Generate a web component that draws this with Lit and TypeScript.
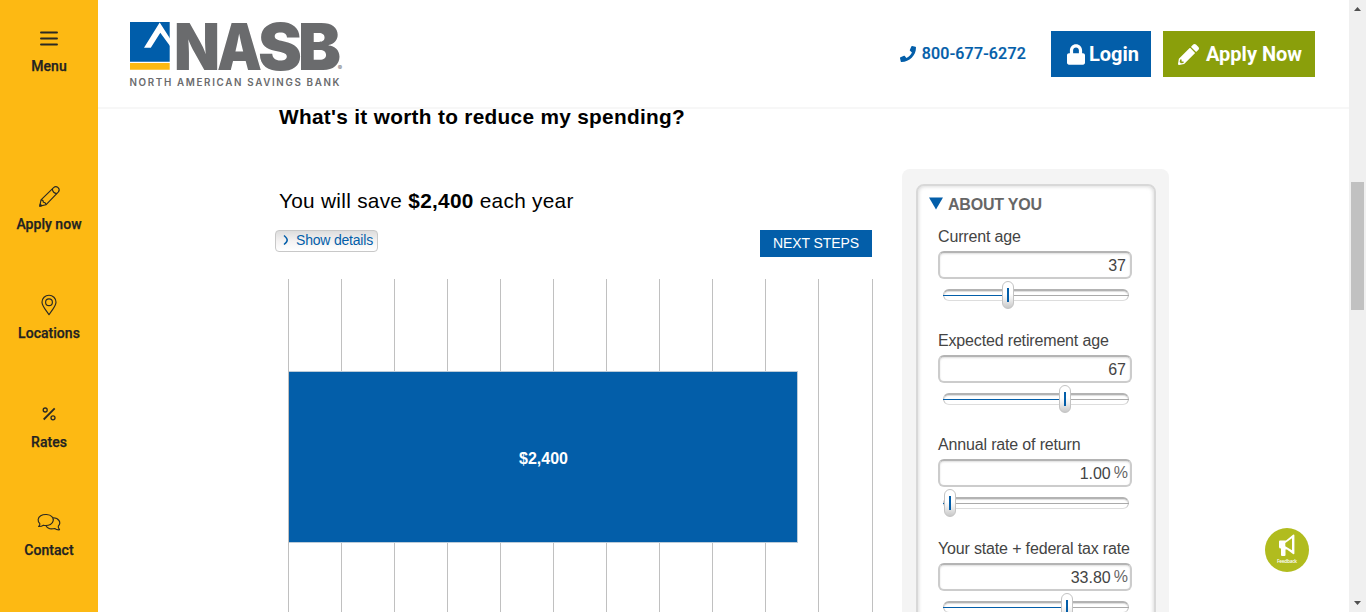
import { LitElement, html, svg, css } from "lit";
import { customElement, property } from "lit/decorators.js";

const navIcons: Record<string, unknown> = {
  menu: svg`<path d="M4 6.500h16M4 12.500h16M4 18.500h16" stroke-width="1.900" stroke-linecap="round"/>`,
  pencil: svg`<path d="M2.800 22.100l1.200-6.300L16.600 3.600c1.500-1.400 3.100-1.200 4.500.1 1.400 1.400 1.500 3 .1 4.500L8.900 20.800z"/><path d="M4 15.800c1.700 0 2.400.7 2.400 2.400 1.700 0 2.400.9 2.500 2.600M15.300 4.900c.3 2.700 2 4.400 4.600 4.700M2.800 22.100l2-.5-1.600-1.500z"/>`,
  pin: svg`<path d="M12 21.700c-2.100-3.500-7-8.500-7-12.500a7 7 0 0 1 14 0c0 4-4.900 9-7 12.500z"/><circle cx="12" cy="9.200" r="3.400"/>`,
  percent: svg`<path d="M6.700 17.500L17.700 6.300" stroke-width="1.800"/><circle cx="8.200" cy="8" r="2" stroke-width="1.300"/><circle cx="16" cy="15.800" r="2" stroke-width="1.300"/>`,
  chat: svg`<path d="M1.600 16.500c1-.8 1.500-1.700 1.200-2.900C.3 11.200.6 7.700 3.700 5.800c3.300-2 8.700-1.700 11.200.9 2.400 2.600 1.500 6.100-1.500 7.700-2.300 1.200-4.500 1.300-7 .8-1.400 1-2.900 1.400-4.800 1.300z"/><path d="M16 7.800c5.800-.1 8.600 4.900 5.300 8.300-.2 1.500.3 2.500 1.200 3.300v.4c-1.800.2-3.400-.2-4.800-1.300-3.700.9-7.300-.1-8.700-2.700"/>`,
};

interface Field { label: string; value: string; unit: string; handle: number; }

@customElement("side-item")
class SideItem extends LitElement {
  @property() icon = "";
  @property() label = "";
  static styles = css`
    :host { display: flex; flex-direction: column; align-items: center; height: 50px; }
    svg { width: 25px; height: 25px; fill: none; stroke: #2b2a24; stroke-width: 1.15; stroke-linejoin: round; overflow: visible; }
    .label { margin-top: 7px; font: 500 14px/16px Roboto, sans-serif; letter-spacing: .03px; color: #222; -webkit-text-stroke: .25px #222; white-space: nowrap; }
  `;
  render() {
    return html`<svg viewBox="0 0 25 25">${navIcons[this.icon]}</svg><span class="label">${this.label}</span>`;
  }
}

@customElement("slider-field")
class SliderField extends LitElement {
  @property() label = "";
  @property() value = "";
  @property() unit = "";
  @property({ type: Number }) handle = 0;
  static styles = css`
    :host { display: block; height: 104px; width: 194px; color: #444; font: 16px/18px "Liberation Sans", Arial, sans-serif; }
    .label { height: 23px; white-space: nowrap; letter-spacing: -.16px; }
    .input { box-sizing: border-box; height: 28px; border: 2px solid #ccc; border-top-color: #b4b4b4; border-radius: 6px; box-shadow: inset 0 1px 2px #ddd; padding: 2px 4px 0 0; display: flex; justify-content: flex-end; align-items: center; background: #fff; }
    .input.has-unit { padding-right: 2px; gap: 3px; }
    .unit { color: #666; font-size: 16px; line-height: 18px; margin-top: -2px; }
    .slider { display: grid; width: 186px; height: 28px; margin: 2px 0 0 5px; align-items: center; }
    .slider > * { grid-area: 1 / 1; }
    .track { box-sizing: border-box; height: 12px; border: 1px solid #c4c4c4; border-top: 2px solid #b3b3b3; border-bottom-color: #ddd; border-radius: 6px; box-shadow: inset 0 1px 1px #ddd; }
    .line { height: 1px; background: #aaa; }
    .fill { height: 1px; background: #035ea9; }
    .handle { box-sizing: border-box; width: 12px; height: 28px; border: 1px solid #c3c3c3; border-radius: 6px; background: linear-gradient(#fff 45%, #eee 65%, #c8c8c8); display: flex; justify-content: center; align-items: center; }
    .mark { width: 2px; height: 14px; background: #035ea9; }
  `;
  render() {
    return html`
      <div class="label">${this.label}</div>
      <div class="input ${this.unit ? "has-unit" : ""}"><span>${this.value}</span>${this.unit ? html`<span class="unit">${this.unit}</span>` : ""}</div>
      <div class="slider">
        <div class="track"></div><div class="line"></div>
        <div class="fill" style="width:${this.handle}px"></div>
        <div class="handle" style="margin-left:${this.handle}px"><div class="mark"></div></div>
      </div>`;
  }
}

@customElement("app-root")
class AppRoot extends LitElement {
  fields: Field[] = [
    { label: "Current age", value: "37", unit: "", handle: 59 },
    { label: "Expected retirement age", value: "67", unit: "", handle: 116 },
    { label: "Annual rate of return", value: "1.00", unit: "%", handle: 1 },
    { label: "Your state + federal tax rate", value: "33.80", unit: "%", handle: 118 },
  ];
  static styles = css`
    :host { display: flex; width: 1366px; height: 612px; overflow: hidden; position: relative; background: #fff; font-family: "Liberation Sans", Arial, sans-serif; }
    .sidebar { width: 98px; flex: none; background: #fdb913; box-sizing: border-box; padding-top: 26px; }
    .links { margin-top: 108px; display: flex; flex-direction: column; gap: 58.760px; }
    .page { flex: 1; min-width: 0; display: flex; flex-direction: column; }
    .header { box-sizing: border-box; height: 109px; flex: none; border-bottom: 2px solid #f7f7f7; display: flex; align-items: flex-start; padding: 20px 34px 0 31px; font-family: Roboto, sans-serif; }
    .logo { width: 216px; height: 70px; }
    .phone { margin: 25px 0 0 auto; display: flex; align-items: center; gap: 6px; font-weight: 500; font-size: 16px; line-height: 18px; letter-spacing: .2px; color: #035ea9; -webkit-text-stroke: .2px #035ea9; }
    .phone svg { width: 16px; height: 16px; }
    .btn { box-sizing: border-box; margin-top: 11px; height: 46px; display: flex; align-items: center; color: #fff; font-weight: 700; font-size: 20px; white-space: nowrap; }
    .login { width: 100px; background: #035ea9; margin-left: 25px; gap: 4px; padding-left: 16px; }
    .login svg { width: 18px; height: 21px; }
    .apply { width: 152px; background: #8a9f0b; margin-left: 12px; gap: 7px; padding-left: 15px; }
    .apply svg { width: 21px; height: 21px; }
    .content { flex: 1; min-height: 0; display: flex; gap: 29px; padding-left: 177px; color: #000; }
    .left { width: 598px; flex: none; display: flex; flex-direction: column; }
    h1 { margin: -4px 0 0 4px; font-size: 20.800px; line-height: 24px; letter-spacing: .310px; white-space: nowrap; }
    .result { margin: 60px 0 0 4px; font-size: 20.800px; line-height: 24px; letter-spacing: .290px; white-space: nowrap; }
    .actions { margin-top: 17px; display: flex; align-items: flex-start; justify-content: space-between; padding-right: 1px; }
    .details { box-sizing: border-box; width: 103px; height: 22px; border: 1px solid #c8c8c8; border-radius: 4px; background: linear-gradient(#ddd, #f4f2f2 50%, #fff); color: #035ea9; font-size: 14px; line-height: 18px; letter-spacing: -.2px; display: flex; align-items: center; padding: 0 0 2px 7px; gap: 7px; white-space: nowrap; }
    .details svg { width: 6px; height: 12px; }
    .next { height: 27px; width: 112px; background: #035ea9; color: #fff; font-size: 14px; line-height: 27px; text-align: center; letter-spacing: -.1px; }
    .chart { margin: 22px 0 0 13px; width: 585px; height: 333px; display: grid; }
    .lines, .bar { grid-area: 1 / 1; }
    .lines { display: flex; gap: 52px; }
    .tick { width: 1px; flex: none; background: #c0c0c0; }
    .tick:last-child { margin-left: 1px; }
    .bar { box-sizing: border-box; margin: 92px 0 0 1px; width: 509px; height: 172px; border: solid #bccbd8; border-width: 1px 1px 1px 0; background: #035ea9; color: #fff; font-weight: 700; font-size: 16px; display: flex; align-items: center; justify-content: center; padding: 3px 0 0 1px; }
    .panel { box-sizing: border-box; margin-top: 60px; width: 267px; height: 443px; overflow: hidden; flex: none; background: #f4f4f4; border-radius: 8px 8px 0 0; padding: 15px 13px 0 14px; }
    .card { box-sizing: border-box; height: 530px; border: 2px solid #d8d8d8; border-radius: 8px; background: #fff; box-shadow: inset 0 0 4px #ccc; padding: 10px 0 0 20px; }
    .section { margin-left: -9px; height: 32px; display: flex; align-items: flex-start; gap: 5px; font-weight: 700; font-size: 16px; line-height: 18px; letter-spacing: -.2px; color: #666; }
    .section svg { width: 14px; height: 13px; margin-top: 1px; }
    .scrollbar { width: 17px; flex: none; background: #f0f0f0; display: flex; flex-direction: column; align-items: center; }
    .arrow { width: 7px; height: 4px; fill: #505050; }
    .up { margin-top: 7px; }
    .thumb { width: 13px; height: 128px; margin-top: 171px; background: #c1c1c1; }
    .down { margin-top: 291px; }
    .feedback { position: absolute; left: 1265px; top: 528px; width: 44px; height: 44px; }
  `;
  render() {
    return html`
      <aside class="sidebar">
        <side-item icon="menu" label="Menu"></side-item>
        <nav class="links">
          <side-item icon="pencil" label="Apply now"></side-item>
          <side-item icon="pin" label="Locations"></side-item>
          <side-item icon="percent" label="Rates"></side-item>
          <side-item icon="chat" label="Contact"></side-item>
        </nav>
      </aside>
      <main class="page">
        <header class="header">
          <svg class="logo" viewBox="129 20 216 70">
            <path fill="#005daa" d="M130 22h39.700v39.800H130z"/><path fill="#fdb913" d="M130 63h39.700v6.700H130z"/>
            <path fill="#fff" d="M144 47.800L159.700 22.500 170 38.500V46L160.300 32.700 150.800 47.800z"/>
            <g font-family="Inter, sans-serif" font-weight="900" font-size="65" fill="#6a6b6d">
              <text x="174" y="69.700" textLength="46" lengthAdjust="spacingAndGlyphs">N</text>
              <text x="217" y="69.700" textLength="45" lengthAdjust="spacingAndGlyphs">A</text>
              <text x="258" y="69.700" textLength="44" lengthAdjust="spacingAndGlyphs">S</text>
              <text x="298" y="69.700" textLength="43" lengthAdjust="spacingAndGlyphs">B</text>
            </g>
            <text x="129.500" y="86" textLength="210" font-family="Inter, sans-serif" font-weight="600" font-size="9.800" fill="#6a6b6d">NORTH AMERICAN SAVINGS BANK</text>
            <text x="337.800" y="70" font-family="Inter, sans-serif" font-size="6.500" fill="#6a6b6d">®</text>
          </svg>
          <div class="phone">
            <svg viewBox="0 0 512 512"><path fill="currentColor" d="M493.400 24.600l-104-24c-11.300-2.600-22.900 3.300-27.500 13.900l-48 112c-4.200 9.800-1.400 21.300 6.900 28l60.600 49.600c-36 76.700-98.900 140.500-177.200 177.200l-49.600-60.600c-6.800-8.300-18.200-11.100-28-6.900l-112 48C3.900 366.500-2 378.100.6 389.400l24 104C27.100 504.200 36.700 512 48 512c256.100 0 464-207.500 464-464 0-11.200-7.700-20.900-18.600-23.400z"/></svg>
            <span>800-677-6272</span>
          </div>
          <div class="btn login"><svg viewBox="0 0 448 512"><path fill="currentColor" d="M400 224h-24v-72C376 68.200 307.800 0 224 0S72 68.200 72 152v72H48c-26.500 0-48 21.500-48 48v192c0 26.500 21.500 48 48 48h352c26.500 0 48-21.500 48-48V272c0-26.500-21.500-48-48-48zm-104 0H152v-72c0-39.700 32.300-72 72-72s72 32.300 72 72v72z"/></svg><span>Login</span></div>
          <div class="btn apply"><svg viewBox="0 0 512 512"><path fill="currentColor" d="M497.900 142.100l-46.100 46.100c-4.700 4.700-12.300 4.700-17 0l-111-111c-4.700-4.700-4.700-12.300 0-17l46.100-46.100c18.700-18.700 49.100-18.700 67.900 0l60.100 60.100c18.800 18.700 18.800 49.100 0 67.900zM284.200 99.800L21.600 362.400.4 483.900c-2.900 16.400 11.400 30.600 27.800 27.800l121.500-21.300 262.600-262.600c4.700-4.700 4.700-12.300 0-17l-111-111c-4.800-4.700-12.400-4.700-17.100 0zM88 424h48v36.300l-64.500 11.300-31.100-31.100L51.700 376H88v48z"/></svg><span>Apply Now</span></div>
        </header>
        <div class="content">
          <section class="left">
            <h1>What's it worth to reduce my spending?</h1>
            <div class="result">You will save <b>$2,400</b> each year</div>
            <div class="actions">
              <div class="details"><svg viewBox="0 0 6 12"><path d="M1 1.500C5.300 5 5.300 7 1 10.500" fill="none" stroke="#035ea9" stroke-width="1.500"/></svg><span>Show details</span></div>
              <div class="next">NEXT STEPS</div>
            </div>
            <div class="chart">
              <div class="lines">${Array.from({ length: 12 }, () => html`<div class="tick"></div>`)}</div>
              <div class="bar">$2,400</div>
            </div>
          </section>
          <section class="panel">
            <div class="card">
              <div class="section"><svg viewBox="0 0 14 13"><path d="M0 .5h14L7 12.500z" fill="#035ea9"/></svg><span>ABOUT YOU</span></div>
              ${this.fields.map(f => html`<slider-field .label=${f.label} .value=${f.value} .unit=${f.unit} .handle=${f.handle}></slider-field>`)}
            </div>
          </section>
        </div>
      </main>
      <div class="scrollbar">
        <svg class="arrow up" viewBox="0 0 7 4"><path d="M0 4L3.500 0 7 4z"/></svg>
        <div class="thumb"></div>
        <svg class="arrow down" viewBox="0 0 7 4"><path d="M0 0L3.500 4 7 0z"/></svg>
      </div>
      <svg class="feedback" viewBox="0 0 44 44">
        <circle cx="22" cy="22" r="22" fill="#b1bc1e"/>
        <path fill="#fff" d="M14 13.500q0-1 1-1h6L28 6.700q1.400-.6 1.400.8v17.700q0 1.400-1.400.8L22 21.500h-1.500V27q0 1-1 1H17q-1 0-1-1v-6.500q-2 0-2-1.500z"/>
        <path fill="#b1bc1e" d="M20.300 15L27 10.200V22.300L20.300 18.200z"/>
        <text x="12" y="35" textLength="20" font-family="Open Sans, sans-serif" font-weight="600" font-size="4.800" fill="#fff">Feedback</text>
      </svg>`;
  }
}
